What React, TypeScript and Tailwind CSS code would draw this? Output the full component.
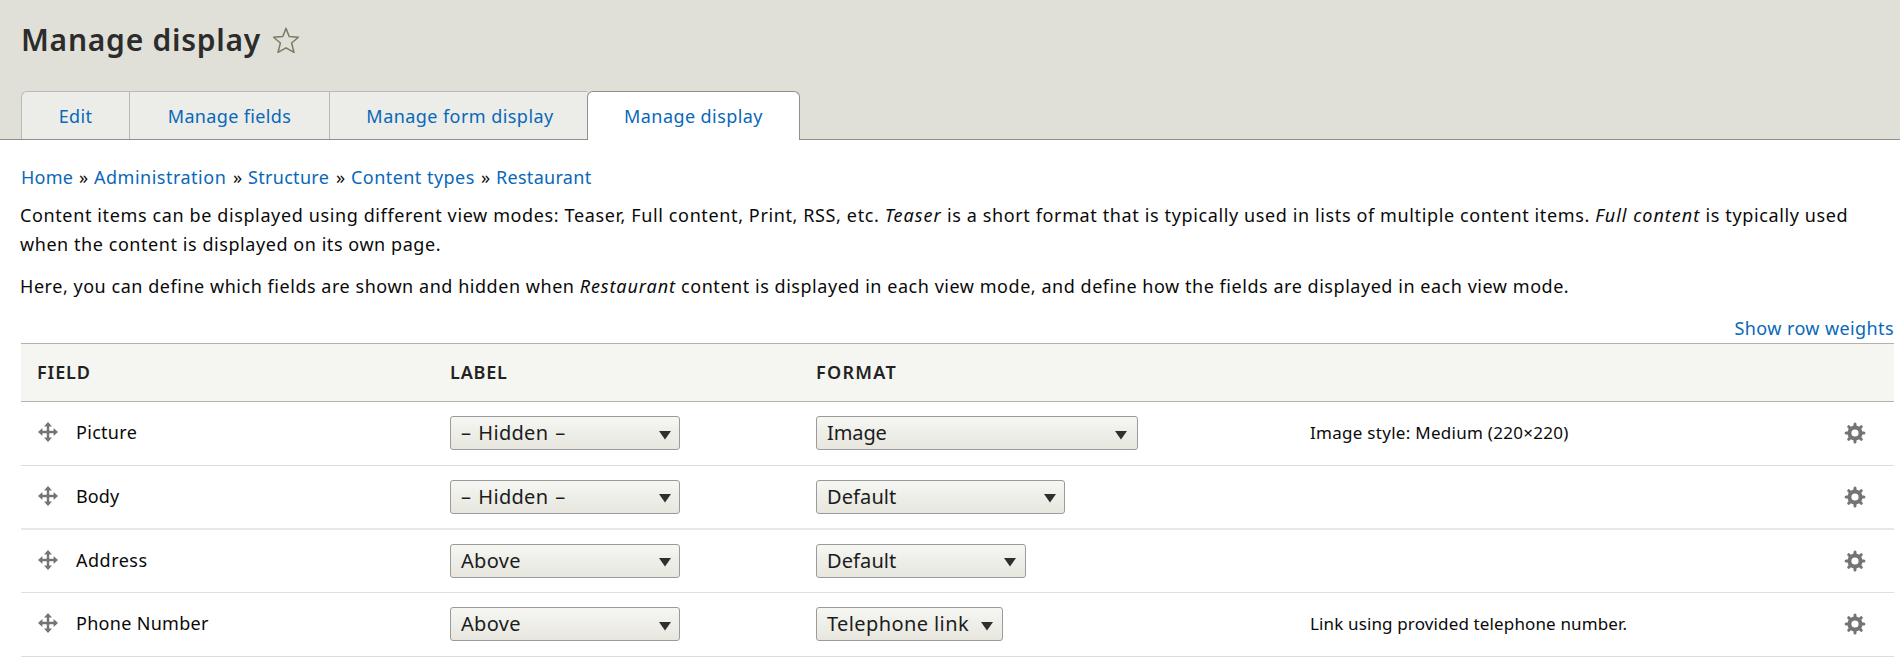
import type { ReactNode } from "react";

const link = "text-[#0868b9]";

const tabs = [
  { label: "Edit", width: "w-[108px]", text: "tracking-[0.3px]" },
  { label: "Manage fields", width: "w-[200px]", text: "tracking-[0.36px]" },
  { label: "Manage form display", width: "w-[258px] pl-[3px]", text: "tracking-[0.44px]" },
];

const crumbs = [
  { label: "Home", box: "w-[58px]", text: "tracking-[0.2px]" },
  { label: "Administration", box: "w-[139px]", text: "tracking-[0.5px]" },
  { label: "Structure", box: "w-[88px]", text: "tracking-[0.3px]" },
  { label: "Content types", box: "w-[130px]", text: "tracking-[0.45px]" },
];

type Row = {
  field: string;
  fieldText: string;
  label: string;
  labelText: string;
  format: string;
  formatText: string;
  formatBox: string;
  summary?: string;
  summaryText?: string;
  row: string;
};

const rows: Row[] = [
  {
    field: "Picture",
    fieldText: "tracking-[0.3px]",
    label: "– Hidden –",
    labelText: "tracking-[0.3px] [word-spacing:1.5px]",
    format: "Image",
    formatText: "tracking-[-0.1px]",
    formatBox: "w-[322px] pr-[9px]",
    summary: "Image style: Medium (220×220)",
    summaryText: "tracking-[0.28px]",
    row: "h-16 border-b border-[#dcddd7]",
  },
  {
    field: "Body",
    fieldText: "tracking-[0.1px]",
    label: "– Hidden –",
    labelText: "tracking-[0.3px] [word-spacing:1.5px]",
    format: "Default",
    formatText: "tracking-[0.1px]",
    formatBox: "w-[249px] pr-[7px]",
    row: "h-16 border-b-2 border-[#e8e8e3]",
  },
  {
    field: "Address",
    fieldText: "tracking-[0.5px]",
    label: "Above",
    labelText: "tracking-[0.3px]",
    format: "Default",
    formatText: "tracking-[0.1px]",
    formatBox: "w-[210px] pr-2",
    row: "h-[63px] border-b border-[#e0e0da]",
  },
  {
    field: "Phone Number",
    fieldText: "tracking-[0.3px]",
    label: "Above",
    labelText: "tracking-[0.3px]",
    format: "Telephone link",
    formatText: "tracking-[0.4px]",
    formatBox: "w-[187px] pr-2",
    summary: "Link using provided telephone number.",
    summaryText: "tracking-[0.14px]",
    row: "h-16 border-b border-[#dcddd7]",
  },
];

function Star() {
  return (
    <svg width="28" height="28" viewBox="0 0 28 28" fill="none" stroke="#7d7a62" strokeWidth="1.5" strokeLinejoin="round">
      <path d="M14 2.4 L17.2 10.5 L26.4 11.3 L19.6 17 L22 26.4 L14 21.8 L6 26.4 L8.4 17 L1.6 11.3 L10.8 10.5 Z" />
    </svg>
  );
}

function MoveIcon() {
  return (
    <svg width="20" height="20" viewBox="0 0 20 20" fill="#747474">
      <path d="M10 0 L14 4.4 H11.2 V8.8 H15.6 V6 L20 10 L15.6 14 V11.2 H11.2 V15.6 H14 L10 20 L6 15.6 H8.8 V11.2 H4.4 V14 L0 10 L4.4 6 V8.8 H8.8 V4.4 H6 Z" />
    </svg>
  );
}

const teeth = [0, 45, 90, 135, 180, 225, 270, 315];

function GearIcon() {
  return (
    <svg width="22" height="22" viewBox="0 0 22 22" fill="none" stroke="#747474">
      <circle cx="11" cy="11" r="5.6" strokeWidth="4" />
      {teeth.map((a) => (
        <path key={a} d="M11 4.5 V2.1" strokeWidth="3" strokeLinecap="round" transform={`rotate(${a} 11 11)`} />
      ))}
    </svg>
  );
}

function Select({ children, box, text }: { children: ReactNode; box: string; text: string }) {
  return (
    <button
      className={`flex h-[34px] items-center justify-between rounded-[3px] border border-[#9b9b9a] bg-linear-to-b from-[#f6f6f3] to-[#e7e7df] pl-2.5 text-[20px] text-[#1c1c1c] ${box}`}
    >
      <span className={`leading-7 whitespace-nowrap ${text}`}>{children}</span>
      <svg width="14" height="10" viewBox="0 0 14 10" className="mt-[3px] shrink-0">
        <path d="M1 1 H13 L7 9.4 Z" fill="#2f2f2f" />
      </svg>
    </button>
  );
}

export default function App() {
  return (
    <div className="h-[660px] w-[1900px] overflow-hidden bg-white font-['Noto_Sans','Open_Sans',sans-serif] text-[18px] text-[#0a0a0a]">
      <header className="flex h-[140px] flex-col justify-between border-b border-[#8f908c] bg-[#e0e0d8]">
        <div className="flex h-20 items-center pl-[21px]">
          <h1 className="w-[251px] text-[30px] leading-10 font-semibold tracking-[0.75px] whitespace-nowrap text-[#2c2c2c]">
            Manage display
          </h1>
          <Star />
        </div>
        <nav className="-mb-px flex h-[49px] pl-[21px]">
          {tabs.map((t, i) => (
            <a
              key={t.label}
              className={`mb-px flex items-center justify-center border-t border-l border-[#b9bab8] bg-[#ecede8] pt-px ${link} ${t.width} ${i === 0 ? "rounded-tl-md" : ""}`}
            >
              <span className={`whitespace-nowrap ${t.text}`}>{t.label}</span>
            </a>
          ))}
          <a className={`flex w-[213px] items-center justify-center rounded-t-md border border-b-0 border-[#8f908c] bg-white ${link}`}>
            <span className="tracking-[0.42px] whitespace-nowrap">Manage display</span>
          </a>
        </nav>
      </header>

      <main className="pt-[23px] pr-1.5 pl-5">
        <div className="flex h-7 items-center pl-px leading-7 whitespace-nowrap">
          {crumbs.map((c) => (
            <div key={c.label} className="flex">
              <a className={`${link} ${c.box} ${c.text}`}>{c.label}</a>
              <span className="w-[15px]">»</span>
            </div>
          ))}
          <a className={`${link} tracking-[0.3px]`}>Restaurant</a>
        </div>

        <div className="pt-2.5 leading-[28.5px] tracking-[0.62px] whitespace-nowrap">
          <p>
            Content items can be displayed using different view modes: Teaser, Full content, Print, RSS, etc.{" "}
            <em className="tracking-[1px]">Teaser</em> is a short format that is typically used in lists of multiple content items.{" "}
            <em className="tracking-[1px]">Full content</em> is typically used
            <br />
            <span className="tracking-[0.56px]">when the content is displayed on its own page.</span>
          </p>
          <p className="pt-3.5 tracking-[0.54px]">
            Here, you can define which fields are shown and hidden when <em className="tracking-[0.9px]">Restaurant</em> content is
            displayed in each view mode, and define how the fields are displayed in each view mode.
          </p>
        </div>

        <div className="mt-[13px] flex h-[29px] justify-end leading-[29px]">
          <a className={`${link} tracking-[0.4px]`}>Show row weights</a>
        </div>

        <section className="ml-px">
          <div className="grid h-[59px] grid-cols-[429px_366px_1fr] items-center border-t border-b border-[#b2b4a9] bg-[#f5f5f1] font-semibold text-[#222]">
            <span className="pl-4 tracking-[0.9px]">FIELD</span>
            <span className="tracking-[0.8px]">LABEL</span>
            <span className="tracking-[1.3px]">FORMAT</span>
          </div>
          {rows.map((r) => (
            <div key={r.field} className={`grid grid-cols-[429px_366px_494px_1fr_auto] items-center ${r.row}`}>
              <div className="flex items-center gap-[18px] pb-0.5 pl-[17px]">
                <MoveIcon />
                <span className={`leading-7 ${r.fieldText}`}>{r.field}</span>
              </div>
              <Select box="w-[230px] pr-[7px]" text={r.labelText}>
                {r.label}
              </Select>
              <Select box={r.formatBox} text={r.formatText}>
                {r.format}
              </Select>
              <span className={`pb-px text-[17px] whitespace-nowrap ${r.summaryText ?? ""}`}>{r.summary}</span>
              <div className="pr-7">
                <GearIcon />
              </div>
            </div>
          ))}
        </section>
      </main>
    </div>
  );
}
